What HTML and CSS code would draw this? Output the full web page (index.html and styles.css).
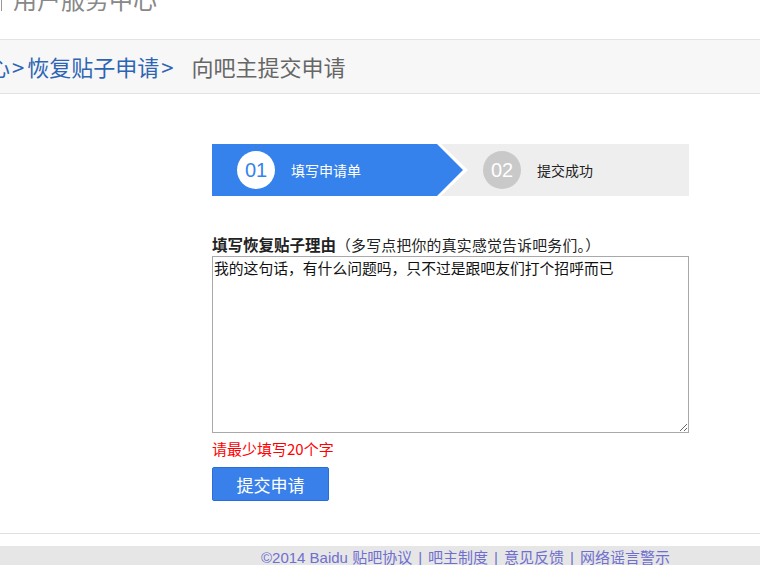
FILE: index.html
```html
<!DOCTYPE html>
<html lang="zh-CN">
<head>
    <meta charset="UTF-8">
    <title>用户服务中心 - 恢复贴子申请</title>
    <link rel="stylesheet" href="styles.css">
</head>
<body>
    <div class="header">
        <div class="title"><span class="sep"></span>用户服务中心</div>
    </div>

    <div class="crumb">
        <span class="crumb-link">中心<span class="arr">&gt;</span>恢复贴子申请<span class="arr">&gt;</span></span>
        <span class="crumb-cur">向吧主提交申请</span>
    </div>

    <div class="main">
        <div class="steps">
            <div class="step step-on">
                <div class="step-inner">
                    <span class="num">01</span>
                    <span class="step-name">填写申请单</span>
                </div>
            </div>
            <div class="step step-off">
                <span class="num">02</span>
                <span class="step-name">提交成功</span>
            </div>
        </div>

        <div class="label"><b>填写恢复贴子理由</b>（多写点把你的真实感觉告诉吧务们。）</div>
        <textarea class="reason">我的这句话，有什么问题吗，只不过是跟吧友们打个招呼而已</textarea>
        <div class="tip">请最少填写20个字</div>
        <button class="btn-submit">提交申请</button>
    </div>

    <div class="line"></div>

    <div class="footer">
        ©2014 Baidu <a href="#">贴吧协议</a><span class="bar">|</span><a href="#">吧主制度</a><span class="bar">|</span><a href="#">意见反馈</a><span class="bar">|</span><a href="#">网络谣言警示</a>
    </div>
</body>
</html>
```

FILE: styles.css
```css
body {
    margin: 0;
    font-family: "Noto Sans CJK SC", "DejaVu Sans", sans-serif;
    background: #fff;
    color: #333;
    overflow: hidden;
    height: 565px;
}
.header {
    height: 39px;
    border-bottom: 1px solid #e3e3e3;
    overflow: hidden;
}
.title {
    margin-top: -13px;
    font-size: 24px;
    line-height: 24px;
    color: #888;
}
.sep {
    display: inline-block;
    width: 1px;
    height: 24px;
    background: #999;
    margin: 0 11px 0 1px;
    vertical-align: top;
}
.crumb {
    height: 53px;
    line-height: 53px;
    background: #f7f7f7;
    border-bottom: 1px solid #e3e3e3;
    font-size: 22px;
    white-space: nowrap;
    overflow: hidden;
}
.crumb-link {
    margin-left: -34px;
    color: #2d64b3;
}
.arr {
    margin: 0 3px 0 2px;
}
.crumb-cur {
    margin-left: 10px;
    color: #666;
}
.main {
    margin-left: 212px;
    width: 477px;
    padding-top: 50px;
}
.steps {
    display: flex;
    height: 52px;
    background: #eee;
}
.step {
    display: flex;
    align-items: center;
}
.step-on {
    width: 256px;
    background: #fff;
    clip-path: polygon(0 0, 229px 0, 256px 26px, 229px 52px, 0 52px);
}
.step-inner {
    display: flex;
    align-items: center;
    width: 251px;
    height: 52px;
    background: #3582ed;
    clip-path: polygon(0 0, 225px 0, 251px 26px, 225px 52px, 0 52px);
}
.num {
    width: 38px;
    height: 38px;
    border-radius: 50%;
    display: flex;
    align-items: center;
    justify-content: center;
    font-family: "Liberation Sans", Arial, sans-serif;
    font-size: 20px;
}
.step-on .num {
    margin-left: 25px;
    background: #fff;
    color: #3582ed;
}
.step-off .num {
    margin-left: 15px;
    background: #c9c9c9;
    color: #fff;
}
.step-name {
    margin-left: 16px;
    font-size: 14px;
}
.step-on .step-name {
    color: #fff;
}
.step-off .step-name {
    color: #222;
}
.label {
    margin-top: 38px;
    height: 20px;
    font-size: 14.8px;
    line-height: 20px;
    color: #222;
    letter-spacing: 0.3px;
}
.label b {
    font-size: 15.5px;
    letter-spacing: 0;
}
.reason {
    display: block;
    box-sizing: border-box;
    width: 477px;
    height: 177px;
    margin-top: 2px;
    padding: 1px 1px;
    border: 1px solid #a9a9a9;
    font-family: "Noto Sans CJK SC", sans-serif;
    font-size: 14.8px;
    line-height: 20px;
    color: #111;
}
.tip {
    margin-top: 6px;
    font-size: 15px;
    line-height: 20px;
    color: #f00;
}
.btn-submit {
    display: block;
    margin-top: 8px;
    width: 117px;
    height: 34px;
    padding: 0;
    border: 1px solid #2a6dd6;
    border-radius: 2px;
    background: #3a80eb;
    color: #fff;
    font-family: "Noto Sans CJK SC", sans-serif;
    font-size: 17px;
}
.line {
    margin-top: 32px;
    height: 1px;
    background: #e0e0e0;
}
.footer {
    margin-top: 12px;
    padding: 2px 0 0 261px;
    height: 30px;
    background: #e6e6e6;
    font-family: "Liberation Sans", "Noto Sans CJK SC", sans-serif;
    font-size: 15px;
    line-height: 20px;
    color: #6f6fcf;
    white-space: nowrap;
}
.footer a {
    color: #6f6fcf;
    text-decoration: none;
}
.bar {
    margin: 0 6px;
}
```
